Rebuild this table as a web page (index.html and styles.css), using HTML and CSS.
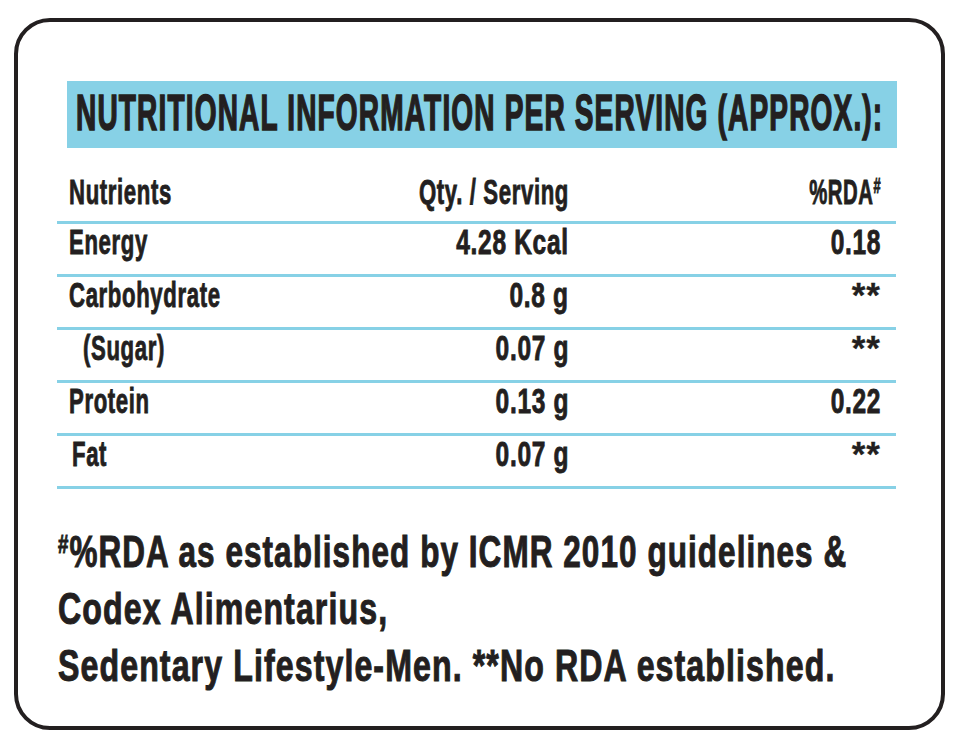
FILE: index.html
```html
<!DOCTYPE html>
<html lang="en">
<head>
<meta charset="utf-8">
<title>Nutritional Information</title>
<link rel="stylesheet" href="styles.css">
</head>
<body>
<div class="card">
  <div class="band"><span class="t t-head">NUTRITIONAL INFORMATION PER SERVING (APPROX.):</span></div>
  <div class="table">
    <div class="row row-head">
      <div class="c1"><span class="t t-lab">Nutrients</span></div>
      <div class="c2"><span class="t t-lab tr">Qty. / Serving</span></div>
      <div class="c3"><span class="t t-rda tr">%RDA<sup class="hash">#</sup></span></div>
    </div>
    <div class="row">
      <div class="c1"><span class="t t-lab">Energy</span></div>
      <div class="c2"><span class="t t-num tr">4.28 Kcal</span></div>
      <div class="c3"><span class="t t-num tr">0.18</span></div>
    </div>
    <div class="row">
      <div class="c1"><span class="t t-lab">Carbohydrate</span></div>
      <div class="c2"><span class="t t-num tr">0.8 g</span></div>
      <div class="c3"><span class="t t-star tr">**</span></div>
    </div>
    <div class="row">
      <div class="c1 indent"><span class="t t-lab">(Sugar)</span></div>
      <div class="c2"><span class="t t-num tr">0.07 g</span></div>
      <div class="c3"><span class="t t-star tr">**</span></div>
    </div>
    <div class="row">
      <div class="c1"><span class="t t-lab">Protein</span></div>
      <div class="c2"><span class="t t-num tr">0.13 g</span></div>
      <div class="c3"><span class="t t-num tr">0.22</span></div>
    </div>
    <div class="row">
      <div class="c1 indent-sm"><span class="t t-lab">Fat</span></div>
      <div class="c2"><span class="t t-num tr">0.07 g</span></div>
      <div class="c3"><span class="t t-star tr">**</span></div>
    </div>
  </div>
  <div class="note">
    <div class="note-line"><span class="t t-note t-note-first"><sup class="hash-note">#</sup>%RDA as established by ICMR 2010 guidelines &amp;</span></div>
    <div class="note-line"><span class="t t-note">Codex Alimentarius,</span></div>
    <div class="note-line"><span class="t t-note">Sedentary Lifestyle-Men. **No RDA established.</span></div>
  </div>
</div>
</body>
</html>
```
FILE: styles.css
```css
html, body {
  margin: 0;
  padding: 0;
  background: #ffffff;
}
body {
  font-family: "Liberation Sans", Arial, sans-serif;
  font-weight: bold;
  color: #231f20;
}
.card {
  box-sizing: border-box;
  margin: 18px 0 0 14px;
  width: 931px;
  height: 712px;
  border: 4px solid #231f20;
  border-radius: 36px;
  padding-top: 59px;
  overflow: hidden;
}
.band {
  box-sizing: border-box;
  margin-left: 49px;
  width: 830px;
  height: 67px;
  padding: 7px 0 0 9px;
  background: #87d1e6;
  font-size: 50px;
  line-height: 50px;
  white-space: nowrap;
}
.t {
  display: inline-block;
  white-space: nowrap;
  transform-origin: left center;
  -webkit-text-stroke: 0.9px #231f20;
}
.tr {
  transform-origin: right center;
}
.t-head {
  letter-spacing: 2px;
  transform: scaleX(0.562);
  -webkit-text-stroke: 1.6px #231f20;
}
.table {
  margin-left: 39px;
  width: 839px;
}
.row {
  display: grid;
  grid-template-columns: 300px 200px 1fr;
  padding: 0 15px 0 12px;
  height: 50px;
  border-bottom: 3px solid #87d1e6;
  font-size: 35px;
  line-height: 35px;
}
.row-head {
  padding-top: 26px;
  height: 47px;
}
.c1 {
  white-space: nowrap;
}
.c2, .c3 {
  display: flex;
  justify-content: flex-end;
  align-items: flex-start;
  white-space: nowrap;
}
.indent {
  padding-left: 14px;
}
.indent-sm {
  padding-left: 3px;
}
.t-lab {
  letter-spacing: 1px;
  transform: scaleX(0.633);
}
.t-rda {
  letter-spacing: 1px;
  transform: scaleX(0.58);
}
.t-num {
  letter-spacing: 1px;
  transform: scaleX(0.70);
}
.t-star {
  letter-spacing: 1px;
  -webkit-text-stroke: 0.3px #231f20;
}
.hash {
  font-size: 22px;
  line-height: 0;
  vertical-align: 11px;
}
.note {
  margin: 34px 0 0 40px;
  font-size: 44px;
  line-height: 57px;
}
.note-line {
  white-space: nowrap;
}
.t-note {
  letter-spacing: 1.5px;
  transform: scaleX(0.73);
  -webkit-text-stroke: 1px #231f20;
}
.t-note-first {
  transform: scaleX(0.715);
}
.hash-note {
  font-size: 26px;
  line-height: 0;
  vertical-align: 14px;
}
```
